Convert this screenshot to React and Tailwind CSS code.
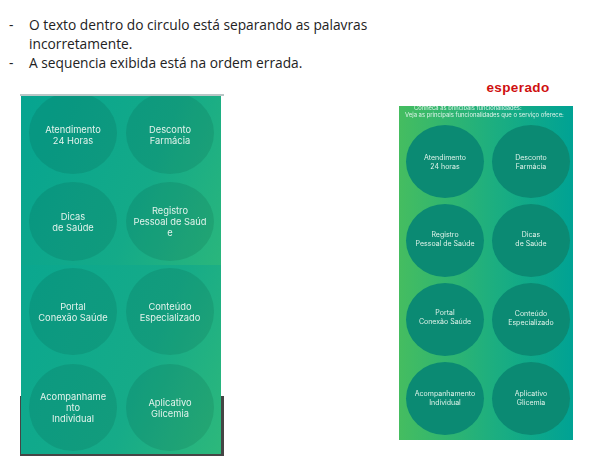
const leftTop = [
  { lines: ["Atendimento", "24 Horas"], h: "h-[82px] pt-[4px]" },
  { lines: ["Desconto", "Farmácia"], h: "h-[82px] pt-[4px]" },
  { lines: ["Dicas", "de Saúde"], h: "h-[79px]" },
  { lines: ["Registro", "Pessoal de Saúd", "e"], h: "h-[79px]" },
];
const leftBottom = [
  { lines: ["Portal", "Conexão Saúde"] },
  { lines: ["Conteúdo", "Especializado"] },
  { lines: ["Acompanhame", "nto", "Individual"] },
  { lines: ["Aplicativo", "Glicemia"] },
];
const right = [
  { lines: ["Atendimento", "24 horas"], extra: "" },
  { lines: ["Desconto", "Farmácia"], extra: "" },
  { lines: ["Registro", "Pessoal de Saúde"], extra: "pb-[3px]" },
  { lines: ["Dicas", "de Saúde"], extra: "pb-[3px]" },
  { lines: ["Portal", "Conexão Saúde"], extra: "pb-[5px]" },
  { lines: ["Conteúdo", "Especializado"], extra: "pb-[3px]" },
  { lines: ["Acompanhamento", "Individual"], extra: "pb-px" },
  { lines: ["Aplicativo", "Glicemia"], extra: "pb-px" },
];

function Lines({ lines }) {
  return lines.map((l) => <span key={l} className="block">{l}</span>);
}

export default function App() {
  return (
    <div className="w-[614px] h-[460px] overflow-hidden bg-white font-['Open_Sans','Noto_Sans',sans-serif]">
      <ul className="pt-[15px] text-[13.75px] leading-[19px] text-[#222]">
        <li className="flex">
          <span className="w-[29px] pl-[9px]">-</span>
          <span className="w-[350px]">O texto dentro do circulo está separando as palavras incorretamente.</span>
        </li>
        <li className="flex">
          <span className="w-[29px] pl-[9px]">-</span>
          <span>A sequencia exibida está na ordem errada.</span>
        </li>
      </ul>

      <div className="flex items-start mt-[7px] pl-[20px]">
        <div className="mt-[15px] w-[204px] h-[362px] border-t-2 border-[#b9c6c6] bg-[linear-gradient(to_bottom,transparent_300px,#454545_300px)]">
          <div className="ml-px w-[200px] h-[358px] overflow-hidden font-['Inter',sans-serif] text-[9.3px] leading-[11px] text-[#e3f3ec] blur-[0.35px]">
            <div className="h-[169px] bg-[linear-gradient(112deg,#06a490,#14aa88_60%,#2ab67c)] pt-px">
              <div className="grid grid-cols-[88px_88px] gap-x-[9px] gap-y-[8px] pl-[8px] -mt-[5px]">
                {leftTop.map((c) => (
                  <div key={c.lines[0]} className={`${c.h} rounded-[50%] bg-[#003028]/12 flex items-center justify-center text-center`}>
                    <div><Lines lines={c.lines} /></div>
                  </div>
                ))}
              </div>
            </div>
            <div className="h-[189px] bg-[linear-gradient(112deg,#0aa78f,#16ab88_60%,#2db87b)] pt-[3px]">
              <div className="grid grid-cols-[88px_88px] gap-x-[9px] gap-y-[9px] pl-[8px]">
                {leftBottom.map((c) => (
                  <div key={c.lines[0]} className="h-[87px] rounded-[50%] bg-[#003028]/12 flex items-center justify-center text-center">
                    <div><Lines lines={c.lines} /></div>
                  </div>
                ))}
              </div>
            </div>
          </div>
        </div>

        <div className="ml-[175px] flex flex-col items-start">
          <div className="w-[174px] text-center text-[13.5px] leading-[18px] font-bold text-[#cf1010] font-['Liberation_Sans',sans-serif] tracking-[0.4px] pl-[64px] whitespace-nowrap">esperado</div>
          <div className="mt-[9px] w-[174px] h-[334px] overflow-hidden bg-[linear-gradient(to_right,#45bd60,#1cae80_55%,#00a294)] font-['Inter',sans-serif] text-[#dff3ea] blur-[0.35px]">
            <div className="h-[4px] overflow-hidden pl-[15px] whitespace-nowrap text-[5.8px] leading-[4px]">Conheça as principais funcionalidades:</div>
            <div className="pl-[6px] whitespace-nowrap text-[5.9px] leading-[9px]">Veja as principais funcionalidades que o serviço oferece:</div>
            <div className="grid grid-cols-[78px_78px] gap-x-[8px] gap-y-[6px] pl-[7px] pt-[6px] text-[7px] leading-[9px]">
              {right.map((c) => (
                <div key={c.lines[0]} className={`${c.extra} h-[73px] rounded-[50%] bg-[#0b8a73] flex items-center justify-center text-center`}>
                  <div><Lines lines={c.lines} /></div>
                </div>
              ))}
            </div>
          </div>
        </div>
      </div>
    </div>
  );
}
